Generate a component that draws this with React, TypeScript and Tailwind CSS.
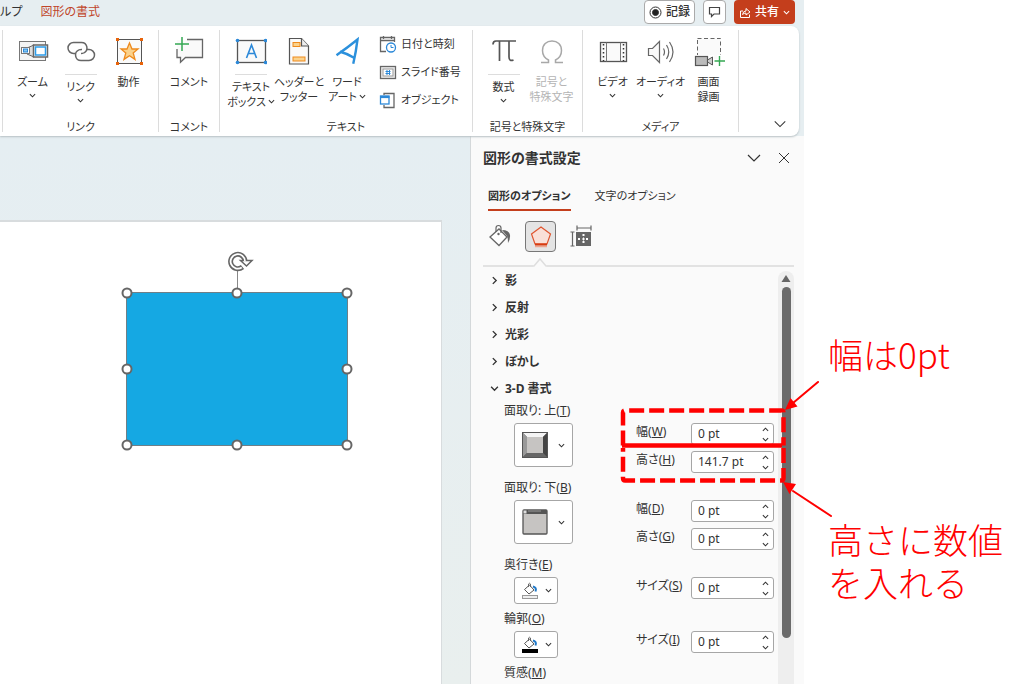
import { useState } from "react";
import type { ReactNode } from "react";

function Chevron({ dir = "down", size = 8 }: { dir?: "down" | "up" | "right"; size?: number }) {
  const d = dir === "down" ? "M1 2.5 4 5.5 7 2.5" : dir === "up" ? "M1 5.5 4 2.5 7 5.5" : "M2.5 1 5.5 4 2.5 7";
  return (
    <svg width={size} height={size} viewBox="0 0 8 8" fill="none" stroke="currentColor" strokeWidth={size > 10 ? 0.6 : 1.2} aria-hidden="true" className="shrink-0">
      <path d={d} />
    </svg>
  );
}

const Svg = ({ children, w = 32, h = 32 }: { children: ReactNode; w?: number; h?: number }) => (
  <svg width={w} height={h} viewBox={`0 0 ${w} ${h}`} fill="none" aria-hidden="true" className="shrink-0">
    {children}
  </svg>
);

const ZoomIcon = () => (
  <Svg>
    <rect x="2.500" y="5.500" width="26" height="19" fill="#f4f4f4" stroke="#777" />
    <path d="M10 12 17 9v12l-7-3" fill="#ddd" stroke="#666" />
    <rect x="4.500" y="11.500" width="8" height="6" fill="#fff" stroke="#777" />
    <rect x="6.500" y="13" width="4" height="3" fill="#83c5f0" stroke="#2b88d8" />
    <rect x="16.500" y="9" width="14" height="12" fill="#fff" stroke="#666" strokeWidth="1.500" />
    <rect x="18.500" y="11" width="10" height="8" fill="#fff" stroke="#2b9be8" strokeWidth="1.500" />
  </Svg>
);
const LinkIcon = () => (
  <Svg>
    <g stroke="#666" strokeWidth="1.500">
      <path d="M10 17.500H8.500a5.500 5.500 0 0 1 0-11h8a5.500 5.500 0 0 1 2 10.600" />
      <path d="M22 13.500h2a5.500 5.500 0 0 1 0 11h-8a5.500 5.500 0 0 1-2-10.600" />
      <path d="M14 13.900q1-.5 3-.4M18.500 17.100q-1 .4-2.500.4" />
    </g>
  </Svg>
);
const ActionIcon = () => (
  <Svg>
    <rect x="4.500" y="3.500" width="24" height="24" fill="#fafafa" stroke="#555" />
    <path d="m16.500 7 2.500 6h6l-4.800 4 1.800 6.400-5.500-3.700-5.500 3.700 1.800-6.400-4.800-4h6z" fill="#fbd28b" stroke="#ee8a1d" strokeWidth="1.300" />
    <g fill="#e8630a">
      <rect x="3" y="2" width="3" height="3" />
      <rect x="27" y="2" width="3" height="3" />
      <rect x="3" y="26" width="3" height="3" />
      <rect x="27" y="26" width="3" height="3" />
    </g>
  </Svg>
);
const CommentIcon = () => (
  <Svg>
    <path d="M4 4h26v18H12l-5 4.500V22H4z" fill="#fafafa" />
    <path d="M14 3.500h15.500v18H12.500l-5 4.800v-4.800H4V13" stroke="#666" strokeWidth="1.300" />
    <path d="M9 1v14M2 8h14" stroke="#35a853" strokeWidth="1.500" />
  </Svg>
);
const TextBoxIcon = () => (
  <Svg>
    <rect x="2.500" y="4.500" width="28" height="22" fill="#fafafa" stroke="#555" strokeWidth="1.300" />
    <path d="m11.500 22 5-13 5 13M13 17.500h7" stroke="#2b88d8" strokeWidth="1.600" />
    <g fill="#2b88d8">
      <circle cx="2.500" cy="4.500" r="1.800" />
      <circle cx="30.500" cy="4.500" r="1.800" />
      <circle cx="2.500" cy="26.500" r="1.800" />
      <circle cx="30.500" cy="26.500" r="1.800" />
    </g>
  </Svg>
);
const HeaderIcon = () => (
  <Svg>
    <path d="M6.500 2.500h12l7 7.500v18h-19z" fill="#fafafa" stroke="#555" strokeWidth="1.200" />
    <path d="M18.500 2.500V10h7" fill="#eee" stroke="#555" strokeWidth="1.200" />
    <rect x="10" y="6.500" width="7" height="4" fill="#fbd28b" stroke="#ee8a1d" />
    <rect x="10" y="21" width="12" height="4" fill="#fbd28b" stroke="#ee8a1d" />
  </Svg>
);
const WordArtIcon = () => (
  <Svg>
    <path d="M6.500 18.500Q16 12 26.500 3.500 25 16 22.500 26.500M10 16q6 1.500 12.500 5.500" stroke="#2b90dc" strokeWidth="2.400" strokeLinecap="square" />
  </Svg>
);
const DateIcon = () => (
  <Svg w={18} h={18}>
    <path d="M7 16.500H1.500v-14h14V7M1.500 5.500h14M4.500 1v3M12.500 1v3" stroke="#666" strokeWidth="1.300" />
    <circle cx="12" cy="12.500" r="4.500" fill="#fff" stroke="#2b88d8" strokeWidth="1.300" />
    <path d="M12 10v2.500h2.500" stroke="#2b88d8" />
  </Svg>
);
const SlideNoIcon = () => (
  <Svg w={18} h={18}>
    <rect x="1.500" y="3.500" width="15" height="12" fill="#eee" stroke="#666" strokeWidth="1.300" />
    <rect x="4" y="6" width="10" height="7" fill="#fff" stroke="#999" />
    <path d="M8 7v5M10.500 7v5M6.500 8.500h5M6.500 10.500h5" stroke="#2b88d8" />
  </Svg>
);
const ObjectIcon = () => (
  <Svg w={18} h={18}>
    <path d="M5 4V2.500h10v14H5V14" stroke="#666" strokeWidth="1.300" />
    <rect x="1.500" y="5" width="8.500" height="8" fill="#fff" stroke="#2b88d8" strokeWidth="1.300" />
    <path d="M1 6h9.500" stroke="#2b88d8" strokeWidth="2.200" />
  </Svg>
);
const PiIcon = () => (
  <Svg>
    <path d="M5 8.500c0-2.500 1-3.500 3-3.500h20M11.500 5v20M21 5v16c0 3 1.500 4.200 4.500 3" stroke="#555" strokeWidth="1.700" />
  </Svg>
);
const OmegaIcon = () => (
  <Svg>
    <path d="M5 26.500h7.500v-2.500C8.500 22 6.500 19 6.500 14.500c0-6 4-9.500 9.500-9.500s9.500 3.500 9.500 9.500c0 4.500-2 7.500-6 9.500v2.500H27" stroke="#a8a8a8" strokeWidth="1.500" />
  </Svg>
);
const VideoIcon = () => (
  <Svg>
    <rect x="3.500" y="6.500" width="26" height="19" fill="#fafafa" stroke="#555" strokeWidth="1.300" />
    <path d="M9.500 6.500v19M23.500 6.500v19" stroke="#777" />
    <path d="M6.500 8v17M26.500 8v17" stroke="#333" strokeWidth="1.500" strokeDasharray="1.500 2.500" />
  </Svg>
);
const AudioIcon = () => (
  <Svg>
    <path d="M3.500 12.500h4l7-7v21l-7-7h-4z" fill="#fafafa" stroke="#666" strokeWidth="1.200" />
    <path d="M18.500 12.500q2 3.500 0 7M21.500 9q4.500 7 0 14M24.500 6q7 10 0 20" stroke="#666" strokeWidth="1.200" />
  </Svg>
);
const RecordScreenIcon = () => (
  <Svg>
    <rect x="4.500" y="2.500" width="23" height="22" fill="#fafafa" stroke="#666" strokeDasharray="4 2.500" />
    <rect x="1" y="19" width="20" height="12" fill="#fff" />
    <rect x="2.500" y="20.500" width="12" height="9" fill="#bbb" stroke="#555" strokeWidth="1.200" />
    <path d="m14.500 24 5-3v8l-5-3z" fill="#ccc" stroke="#555" />
    <path d="M26.500 19v12M21 25h11" stroke="#fff" strokeWidth="4" />
    <path d="M26.500 20v10M21.500 25h10.500" stroke="#35a853" strokeWidth="1.400" />
  </Svg>
);

function RibbonButton({ icon, lines, arrow, inlineArrow, split, disabled }: { icon: ReactNode; lines: string[]; arrow?: boolean; inlineArrow?: boolean; split?: boolean; disabled?: boolean }) {
  return (
    <button type="button" disabled={disabled} className="flex w-12 flex-col items-center whitespace-nowrap text-[#333] disabled:text-[#b4b4b4]">
      {icon}
      <span className={split ? "mt-1.5 flex w-8 flex-col items-center border-t border-[#ddd] pt-1" : "mt-1.5 flex flex-col items-center"}>
        {lines.map((l, i) => (
          <span key={l} className="flex items-center gap-0.5 leading-[15px]">
            {l}
            {inlineArrow && i === lines.length - 1 && <Chevron size={7} />}
          </span>
        ))}
        {arrow && (
          <span className="flex h-3 items-center">
            <Chevron size={7} />
          </span>
        )}
      </span>
    </button>
  );
}

function Group({ label, children, className }: { label: string; children: ReactNode; className: string }) {
  return (
    <section className={`flex flex-col border-r border-[#dcdcdc] ${className}`}>
      <div className="flex flex-1 justify-center pt-1.5">{children}</div>
      <h2 className="text-center leading-[10px]">{label}</h2>
    </section>
  );
}

function SmallCommand({ icon, label }: { icon: ReactNode; label: string }) {
  return (
    <button type="button" className="flex h-7 items-center gap-1 whitespace-nowrap">
      {icon}
      {label}
    </button>
  );
}

function Ribbon() {
  return (
    <div className="relative z-10 mr-[5px] flex h-[110px] rounded-r-lg bg-white py-1 pl-0.5 text-[11px] shadow-[0_1px_2px_#b8c0c4]">
      <Group label="リンク" className="w-[157px] border-l">
        <RibbonButton icon={<ZoomIcon />} lines={["ズーム"]} arrow />
        <RibbonButton icon={<LinkIcon />} lines={["リンク"]} arrow split />
        <RibbonButton icon={<ActionIcon />} lines={["動作"]} />
      </Group>
      <Group label="コメント" className="w-[61px]">
        <RibbonButton icon={<CommentIcon />} lines={["コメント"]} />
      </Group>
      <Group label="テキスト" className="w-[253px]">
        <RibbonButton icon={<TextBoxIcon />} lines={["テキスト", "ボックス"]} inlineArrow split />
        <RibbonButton icon={<HeaderIcon />} lines={["ヘッダーと", "フッター"]} />
        <RibbonButton icon={<WordArtIcon />} lines={["ワード", "アート"]} inlineArrow />
        <div className="-mt-1.5 ml-2 flex w-[86px] flex-col">
          <SmallCommand icon={<DateIcon />} label="日付と時刻" />
          <SmallCommand icon={<SlideNoIcon />} label="スライド番号" />
          <SmallCommand icon={<ObjectIcon />} label="オブジェクト" />
        </div>
      </Group>
      <Group label="記号と特殊文字" className="w-[110px]">
        <RibbonButton icon={<PiIcon />} lines={["数式"]} arrow split />
        <RibbonButton icon={<OmegaIcon />} lines={["記号と", "特殊文字"]} disabled />
      </Group>
      <Group label="メディア" className="w-[156px]">
        <RibbonButton icon={<VideoIcon />} lines={["ビデオ"]} arrow />
        <RibbonButton icon={<AudioIcon />} lines={["オーディオ"]} arrow />
        <RibbonButton icon={<RecordScreenIcon />} lines={["画面", "録画"]} />
      </Group>
      <button type="button" aria-label="リボンを折りたたむ" className="mt-auto mr-3 mb-px ml-auto">
        <Chevron size={14} />
      </button>
    </div>
  );
}

function TitleBar() {
  return (
    <header className="flex h-[26px] items-start overflow-hidden pr-[9px]">
      <nav className="flex flex-1 items-center gap-[18px] pt-1 whitespace-nowrap">
        <a href="#help" className="-ml-3">ヘルプ</a>
        <a href="#format" className="text-[#c0452a]">図形の書式</a>
      </nav>
      <div className="flex gap-2 font-medium">
        <button type="button" className="flex h-6 w-[51px] items-center justify-center gap-1 rounded border border-[#aaa] bg-white">
          <svg width="13" height="13" viewBox="0 0 13 13" fill="none" stroke="#333" aria-hidden="true">
            <circle cx="6.500" cy="6.500" r="5.500" />
            <circle cx="6.500" cy="6.500" r="3" fill="#222" />
          </svg>
          記録
        </button>
        <button type="button" aria-label="コメント" className="flex h-6 w-[23px] items-center justify-center rounded border border-[#aaa] bg-white">
          <svg width="13" height="12" viewBox="0 0 13 12" fill="none" stroke="#444" strokeWidth="1.200" aria-hidden="true">
            <path d="M1.500 1.500h10v6.500H6l-2.500 2.500V8h-2z" />
          </svg>
        </button>
        <button type="button" className="flex h-6 w-[61px] items-center justify-center gap-1 rounded bg-[#c43e1c] text-white">
          <svg width="12" height="13" viewBox="0 0 12 13" fill="none" stroke="currentColor" aria-hidden="true">
            <path d="M4 5H1.500v6.500h9V8.500" />
            <path d="M3.500 8.500Q4 5 7 5V2.500L11 6 7 9V7Q5 7 3.500 8.500z" />
          </svg>
          共有
          <Chevron size={7} />
        </button>
      </div>
    </header>
  );
}

const handles = [
  "left-0 top-0", "left-1/2 top-0", "left-full top-0",
  "left-0 top-1/2", "left-full top-1/2",
  "left-0 top-full", "left-1/2 top-full", "left-full top-full",
];

function SlideCanvas() {
  return (
    <div className="flex flex-1 bg-linear-to-b from-[#e5eef2] to-[#e9efee] pt-[84px] pr-7">
      <div className="relative flex-1 border-t-2 border-r border-[#d8dcde] bg-white">
        <div className="absolute top-[70px] left-[126px] h-[154px] w-[222px] border border-[#6f7f87] bg-[#15a8e3]">
          <svg className="absolute -top-[43px] left-[100px]" width="27" height="43" viewBox="0 0 27 43" fill="none" aria-hidden="true">
            <path d="M10.500 20v23" stroke="#888" />
            <path d="M18 11A7.200 7.200 0 1 0 15.500 17" stroke="#666" strokeWidth="5" />
            <path d="M13.500 10.500h11.500l-5.500 5.500z" fill="#fff" stroke="#666" strokeWidth="1.500" />
            <path d="M18 11.500A7.200 7.200 0 1 0 14.800 17.400" stroke="#fff" strokeWidth="1.800" />
          </svg>
          {handles.map((p) => (
            <span key={p} className={`absolute size-[11px] -translate-x-1/2 -translate-y-1/2 rounded-full border-2 border-[#666] bg-white ${p}`} />
          ))}
        </div>
      </div>
    </div>
  );
}

function SpinField({ label, hotkey, initial, id }: { label: string; hotkey: string; initial: string; id: string }) {
  const [value, setValue] = useState(initial);
  const step = (n: number) => setValue((v) => `${Math.max(0, Math.round((parseFloat(v) + n) * 10) / 10)} pt`);
  return (
    <div className="flex h-[22px]">
      <label htmlFor={id} className="w-[55px] leading-[18px] whitespace-nowrap">
        {label}(<u>{hotkey}</u>)
      </label>
      <div className="flex w-[83px] rounded-[3px] border border-[#a6a6a6] bg-white">
        <input id={id} value={value} onChange={(e) => setValue(e.target.value)} className="w-16 min-w-0 bg-transparent pl-1.5 outline-none" />
        <span className="ml-auto flex w-4 flex-col items-center justify-around">
          <button type="button" aria-label={`${label} 増やす`} onClick={() => step(1)}><Chevron dir="up" size={7} /></button>
          <button type="button" aria-label={`${label} 減らす`} onClick={() => step(-1)}><Chevron size={7} /></button>
        </span>
      </div>
    </div>
  );
}

function Callouts() {
  return (
    <svg className="pointer-events-none absolute -top-[44px] -left-[16px] z-10" width="216" height="142" viewBox="0 0 216 142" fill="none" stroke="#f00" aria-hidden="true">
      <g strokeWidth="4.500" strokeDasharray="15 5">
        <path d="M3 66.500v-33q0-2 2-2h156.500q2 0 2 2v33" />
        <path d="M163.500 69v30q0 2.500-2 2.500H5q-2 0-2-2.500V69" />
      </g>
      <path d="M2 66.500h160" strokeWidth="4.500" />
      <path d="m198 3-25 21M211 137l-38-25" strokeWidth="2" strokeLinecap="round" />
      <path d="m165 31 5.500-12 7 8.500zM163 103l13 2-6.500 10z" fill="#f00" stroke="none" />
    </svg>
  );
}

const BevelTop = () => (
  <Svg w={26} h={26}>
    <path d="M0 0h26v26H0z" fill="#555" />
    <path d="M1 1h24l-4 4H5z" fill="#f4f4f4" />
    <path d="M1 1v24l4-4V5z" fill="#999" />
    <path d="M25 1v24l-4-4V5z" fill="#444" />
    <path d="M1 25h24l-4-4H5z" fill="#666" />
    <path d="M5 5h16v16H5z" fill="#c6c4c2" />
  </Svg>
);
const BevelBottom = () => (
  <Svg w={26} h={26}>
    <rect x="1" y="1" width="24" height="24" rx="1" fill="#c6c4c2" stroke="#555" strokeWidth="1.300" />
    <path d="M1 1h24v4H1z" fill="#555" />
    <rect x="1.500" y="1.500" width="3" height="3" fill="#ddd" />
    <path d="M6 2h13" stroke="#999" />
  </Svg>
);
const BucketSwatch = ({ color, line }: { color: string; line: string }) => (
  <Svg w={18} h={18}>
    <path d="m3.500 7.500 5-4.500 4.500 5-5 4z" fill="#fff" stroke="#555" />
    <path d="M7.500 5V2q1-1.500 2 0v3" stroke="#666" />
    <path d="M12 4.500q4 1 2.500 5" stroke="#1f78c8" strokeWidth="2" />
    <rect x="1.500" y="13.500" width="15" height="3" fill={color} stroke={line} />
  </Svg>
);

function FormatRow({ label, hotkey, tall, swatch, children }: { label: string; hotkey: string; tall?: boolean; swatch: ReactNode; children: ReactNode }) {
  return (
    <div className="pb-1.5">
      <div className="h-[21px] leading-[17px]">
        {label}(<u>{hotkey}</u>)
      </div>
      <div className="flex">
        <div className="w-[132px] pl-2.5">
          <button type="button" aria-label={label} className={`flex items-center justify-center rounded-[3px] border border-[#a6a6a6] bg-white ${tall ? "h-11 w-[59px] gap-2.5" : "h-[27px] w-11 gap-1.5"}`}>
            {swatch}
            <Chevron size={7} />
          </button>
        </div>
        <div className="relative flex flex-col gap-1.5">{children}</div>
      </div>
    </div>
  );
}

function FormatPane() {
  return (
    <aside className="flex w-[334px] shrink-0 flex-col border-l border-[#d4d8da] bg-[#fafafa] pt-1 pr-[10px] pl-3">
      <div className="flex h-9 items-center">
        <h1 className="flex-1 text-[14px] font-bold">図形の書式設定</h1>
        <button type="button" aria-label="作業ウィンドウのオプション" className="mr-4"><Chevron size={16} /></button>
        <button type="button" aria-label="閉じる" className="mr-1">
          <svg width="12" height="12" viewBox="0 0 12 12" stroke="currentColor" aria-hidden="true"><path d="m1 1 10 10M11 1 1 11" /></svg>
        </button>
      </div>
      <div role="tablist" className="flex items-start gap-6 pt-2 pl-[5px] text-[11px]">
        <button role="tab" aria-selected="true" type="button" className="h-[27px] border-b-2 border-[#c43e1c] font-bold">図形のオプション</button>
        <button role="tab" aria-selected="false" type="button" className="h-[27px] border-b-2 border-transparent">文字のオプション</button>
      </div>
      <div className="flex h-[46px] items-center pt-1 pl-[5px]">
        <button type="button" aria-label="塗りつぶしと線">
          <Svg w={24} h={24}>
            <path d="m2 13 9-8 8 8-8 8.500z" fill="#fff" stroke="#666" strokeWidth="1.300" />
            <path d="M8 8V4q0-2.500 2.500-2.500T13 4v5" stroke="#666" strokeWidth="1.200" />
            <circle cx="10.500" cy="10" r="1.200" fill="#666" />
            <path d="M14 6q7 0 8 5 .5 4-2 8 0-5-1-7z" fill="#666" />
          </Svg>
        </button>
        <button type="button" aria-label="効果" aria-pressed="true" className="ml-[13px] flex size-[31px] items-center justify-center rounded border border-[#777] bg-[#e4e4e4]">
          <Svg w={24} h={24}>
            <path d="M12 3 21.500 10 18 20H6L2.500 10z" fill="#f9e0d8" stroke="#e0552f" strokeWidth="1.200" />
            <path d="M6 20.500h12" stroke="#d83b10" strokeWidth="2.200" />
            <path d="M6 22.500h12" stroke="#eda48f" strokeWidth="1.500" />
          </Svg>
        </button>
        <button type="button" aria-label="サイズとプロパティ" className="ml-3.5">
          <Svg w={22} h={22}>
            <path d="M7 3h14M7 .5v5M21 .5v5M2.500 7v14M.5 7h4M.5 21h4" stroke="#666" strokeWidth="1.200" />
            <rect x="6" y="7" width="15" height="14" fill="#666" />
            <path d="M13.500 9v3M13.500 16v3M8 14h3M16 14h3" stroke="#fff" strokeWidth="2" strokeDasharray="2 1" />
            <path d="M13.500 12.500v3M12 14h3" stroke="#fff" />
          </Svg>
        </button>
      </div>
      <div className="flex h-2.5 items-end" aria-hidden="true">
        <span className="w-[50px] border-b-2 border-[#e2e2e2]" />
        <svg width="14" height="10" viewBox="0 0 14 10" fill="none" stroke="#dedede" strokeWidth="1.500"><path d="M0 9h1l6-7 6 7h1" /></svg>
        <span className="flex-1 border-b-2 border-[#e2e2e2]" />
      </div>
      <div className="flex flex-1">
        <div className="flex-1 pl-[7px]">
          {["影", "反射", "光彩", "ぼかし"].map((s) => (
            <button key={s} type="button" className="flex h-[27px] w-full items-center gap-1.5 font-bold">
              <Chevron dir="right" size={9} />
              {s}
            </button>
          ))}
          <button type="button" aria-expanded="true" className="flex h-[27px] w-full items-center gap-1.5 font-bold">
            <Chevron size={9} />
            3-D 書式
          </button>
          <div className="pl-3.5">
            <FormatRow label="面取り: 上" hotkey="T" tall swatch={<BevelTop />}>
              <SpinField id="top-width" label="幅" hotkey="W" initial="0 pt" />
              <SpinField id="top-height" label="高さ" hotkey="H" initial="141.7 pt" />
              <Callouts />
            </FormatRow>
            <FormatRow label="面取り: 下" hotkey="B" tall swatch={<BevelBottom />}>
              <SpinField id="bottom-width" label="幅" hotkey="D" initial="0 pt" />
              <SpinField id="bottom-height" label="高さ" hotkey="G" initial="0 pt" />
            </FormatRow>
            <FormatRow label="奥行き" hotkey="E" swatch={<BucketSwatch color="#eee" line="#999" />}>
              <SpinField id="depth-size" label="サイズ" hotkey="S" initial="0 pt" />
            </FormatRow>
            <FormatRow label="輪郭" hotkey="O" swatch={<BucketSwatch color="#000" line="#000" />}>
              <SpinField id="contour-size" label="サイズ" hotkey="I" initial="0 pt" />
            </FormatRow>
            <div className="h-[18px] leading-[17px]">質感(<u>M</u>)</div>
          </div>
        </div>
        <div className="mt-1 flex w-4 flex-col items-center rounded-t-lg bg-[#eee]" aria-hidden="true">
          <svg width="10" height="16" viewBox="0 0 10 16" fill="#666"><path d="M5 4 9.500 11H.5z" /></svg>
          <span className="h-[351px] w-[9px] rounded-full bg-[#6b6b6b]" />
        </div>
      </div>
    </aside>
  );
}

export default function App() {
  return (
    <div className="flex min-h-screen overflow-hidden bg-white font-['Noto_Sans','Noto_Sans_CJK_JP',sans-serif] text-xs text-[#333] [font-feature-settings:'palt']">
      <main className="flex flex-1 flex-col bg-[#e6eef1]">
        <TitleBar />
        <Ribbon />
        <div className="flex flex-1">
          <SlideCanvas />
          <FormatPane />
        </div>
      </main>
      <aside className="flex w-[220px] shrink-0 flex-col gap-[142px] pt-[332px] pl-6 font-['Noto_Sans_CJK_JP',sans-serif] text-[35px] leading-[43px] font-light whitespace-nowrap text-[#f00] [font-feature-settings:normal]">
        <p>幅は0pt</p>
        <p>
          高さに数値
          <br />
          を入れる
        </p>
      </aside>
    </div>
  );
}
